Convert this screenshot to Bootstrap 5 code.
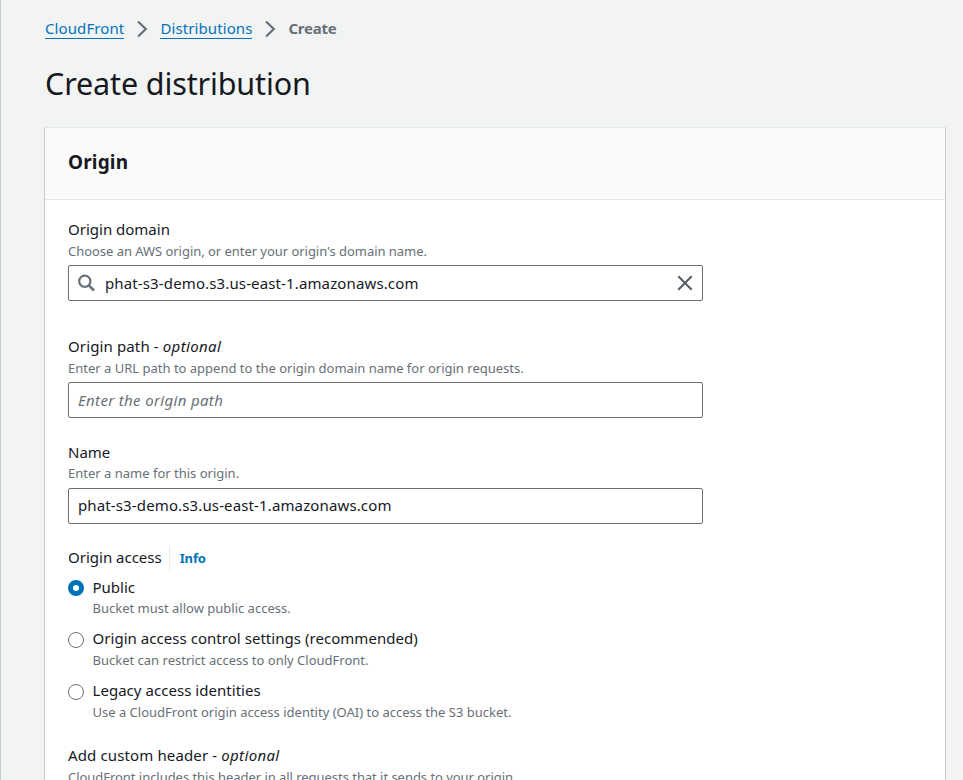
<!DOCTYPE html>
<html lang="en">
<head>
<meta charset="utf-8">
<meta name="viewport" content="width=device-width, initial-scale=1">
<title>Create distribution</title>
<link href="https://cdn.jsdelivr.net/npm/bootstrap@5.3.0/dist/css/bootstrap.min.css" rel="stylesheet">
<style>
html,body{height:780px;overflow:hidden}
body{background:#f2f3f3;color:#16191f;font-family:"Noto Sans",sans-serif;font-size:15px;line-height:22px}
.page{height:780px;overflow:hidden;border-left:1px solid #c6cacd;padding:18px 17px 0 43px}
.crumbs{height:22px;padding-left:1px}
.crumbs a{color:#0073bb;text-decoration:none;border-bottom:1px solid #0073bb;line-height:20px;height:21px;letter-spacing:.1px}
.crumbs strong{color:#687078;letter-spacing:-.25px;line-height:20px}
.crumbs svg{margin:0 12px 0 13px}
.page-title{font-size:30.5px;line-height:40px;font-weight:400;letter-spacing:-.13px;margin:23px 0 0 1px}
.panel{margin-top:24px;height:700px;border:1px solid #c9cccf;border-top-color:#e6e9e9;background:#fff}
.panel-head{height:72px;background:#fafafa;border-bottom:1px solid #e7e9e9;padding:20px 23px}
.panel-head h2{font-size:19px;line-height:28px;font-weight:700;letter-spacing:.15px;margin:0}
.panel-body{padding:18px 23px 0}
.panel-body i{letter-spacing:.35px}
.optional-label{letter-spacing:.13px}
.hint{font-size:13px;line-height:20px;margin-top:1px;color:#687078}
.hint-tight{letter-spacing:-.04px}
.field{width:635px;height:36px;margin-top:4px;border:1px solid #687078;border-radius:2px;padding:0 9px}
.field input{outline:0;color:#16191f;min-width:0;padding:0;letter-spacing:.13px}
.field input::placeholder{font-style:italic;color:#687078;opacity:1;letter-spacing:.34px}
.search-input{margin-left:9px}
.group-path{margin-top:34px}
.group-name{margin-top:23px}
.group-name .hint{margin-top:0}
.group-name .field{margin-top:5px;padding-bottom:2px}
.group-access{margin-top:22px}
.access-info{height:24px;margin-left:7px;padding-left:10px;border-left:1px solid #eaeded;color:#0073bb;font-size:13px;line-height:24px;text-decoration:none;letter-spacing:-.15px}
.group-choices{margin-top:6px}
.choice{padding-left:24.5px;position:relative}
.choice input{position:absolute;left:0;top:4px;width:16px;height:16px;margin:0;appearance:none;border:1px solid #687078;border-radius:50%;background:#fff}
.choice input:checked{border:5px solid #0073bb}
.choice+.choice{margin-top:9px}
.choice+.choice label{letter-spacing:.04px}
.choice+.choice input{top:5px}
.choice:first-of-type .hint{margin-top:0}
.group-header{margin-top:22px}
</style>
</head>
<body>
<main class="page">
<nav class="crumbs d-flex align-items-start" aria-label="Breadcrumb">
<a href="#">CloudFront</a>
<svg class="flex-shrink-0" width="11" height="22" viewBox="0 0 11 22" fill="none" stroke="#687078" stroke-width="2.2"><path d="M1 3.5 8.8 11 1 18.5"/></svg>
<a href="#">Distributions</a>
<svg class="flex-shrink-0" width="11" height="22" viewBox="0 0 11 22" fill="none" stroke="#687078" stroke-width="2.2"><path d="M1 3.5 8.8 11 1 18.5"/></svg>
<strong>Create</strong>
</nav>
<h1 class="page-title">Create distribution</h1>
<section class="panel">
<div class="panel-head"><h2>Origin</h2></div>
<div class="panel-body">
<div>
<label class="d-block" for="domain">Origin domain</label>
<div class="hint hint-tight">Choose an AWS origin, or enter your origin's domain name.</div>
<div class="field d-flex align-items-center">
<svg class="flex-shrink-0" width="18" height="18" viewBox="0 0 18 18" fill="none" stroke="#687078" stroke-width="2.2"><circle cx="6.8" cy="7.3" r="5.6"/><path d="m10.8 11.3 5.2 5.2" stroke-width="2.6"/></svg>
<input id="domain" class="search-input border-0 bg-transparent flex-grow-1" value="phat-s3-demo.s3.us-east-1.amazonaws.com">
<svg class="flex-shrink-0" width="16" height="16" viewBox="0 0 16 16" stroke="#545b64" stroke-width="2"><path d="m1.3 1.3 13.4 13.4M14.7 1.3 1.3 14.7"/></svg>
</div>
</div>
<div class="group-path">
<label class="optional-label d-block" for="path">Origin path - <i>optional</i></label>
<div class="hint">Enter a URL path to append to the origin domain name for origin requests.</div>
<div class="field d-flex align-items-center"><input id="path" class="border-0 bg-transparent w-100" placeholder="Enter the origin path"></div>
</div>
<div class="group-name">
<label class="d-block" for="name">Name</label>
<div class="hint">Enter a name for this origin.</div>
<div class="field d-flex align-items-center"><input id="name" class="border-0 bg-transparent w-100" value="phat-s3-demo.s3.us-east-1.amazonaws.com"></div>
</div>
<div class="group-access">
<header class="d-flex"><span>Origin access</span><a href="#" class="access-info fw-bold">Info</a></header>
<div class="group-choices">
<div class="choice"><input type="radio" name="access" id="a1" checked><label class="d-block" for="a1">Public</label><div class="hint">Bucket must allow public access.</div></div>
<div class="choice"><input type="radio" name="access" id="a2"><label class="d-block" for="a2">Origin access control settings (recommended)</label><div class="hint">Bucket can restrict access to only CloudFront.</div></div>
<div class="choice"><input type="radio" name="access" id="a3"><label class="d-block" for="a3">Legacy access identities</label><div class="hint">Use a CloudFront origin access identity (OAI) to access the S3 bucket.</div></div>
</div>
</div>
<div class="group-header">
<div class="optional-label">Add custom header - <i>optional</i></div>
<div class="hint hint-tight">CloudFront includes this header in all requests that it sends to your origin.</div>
</div>
</div>
</section>
</main>
</body>
</html>
